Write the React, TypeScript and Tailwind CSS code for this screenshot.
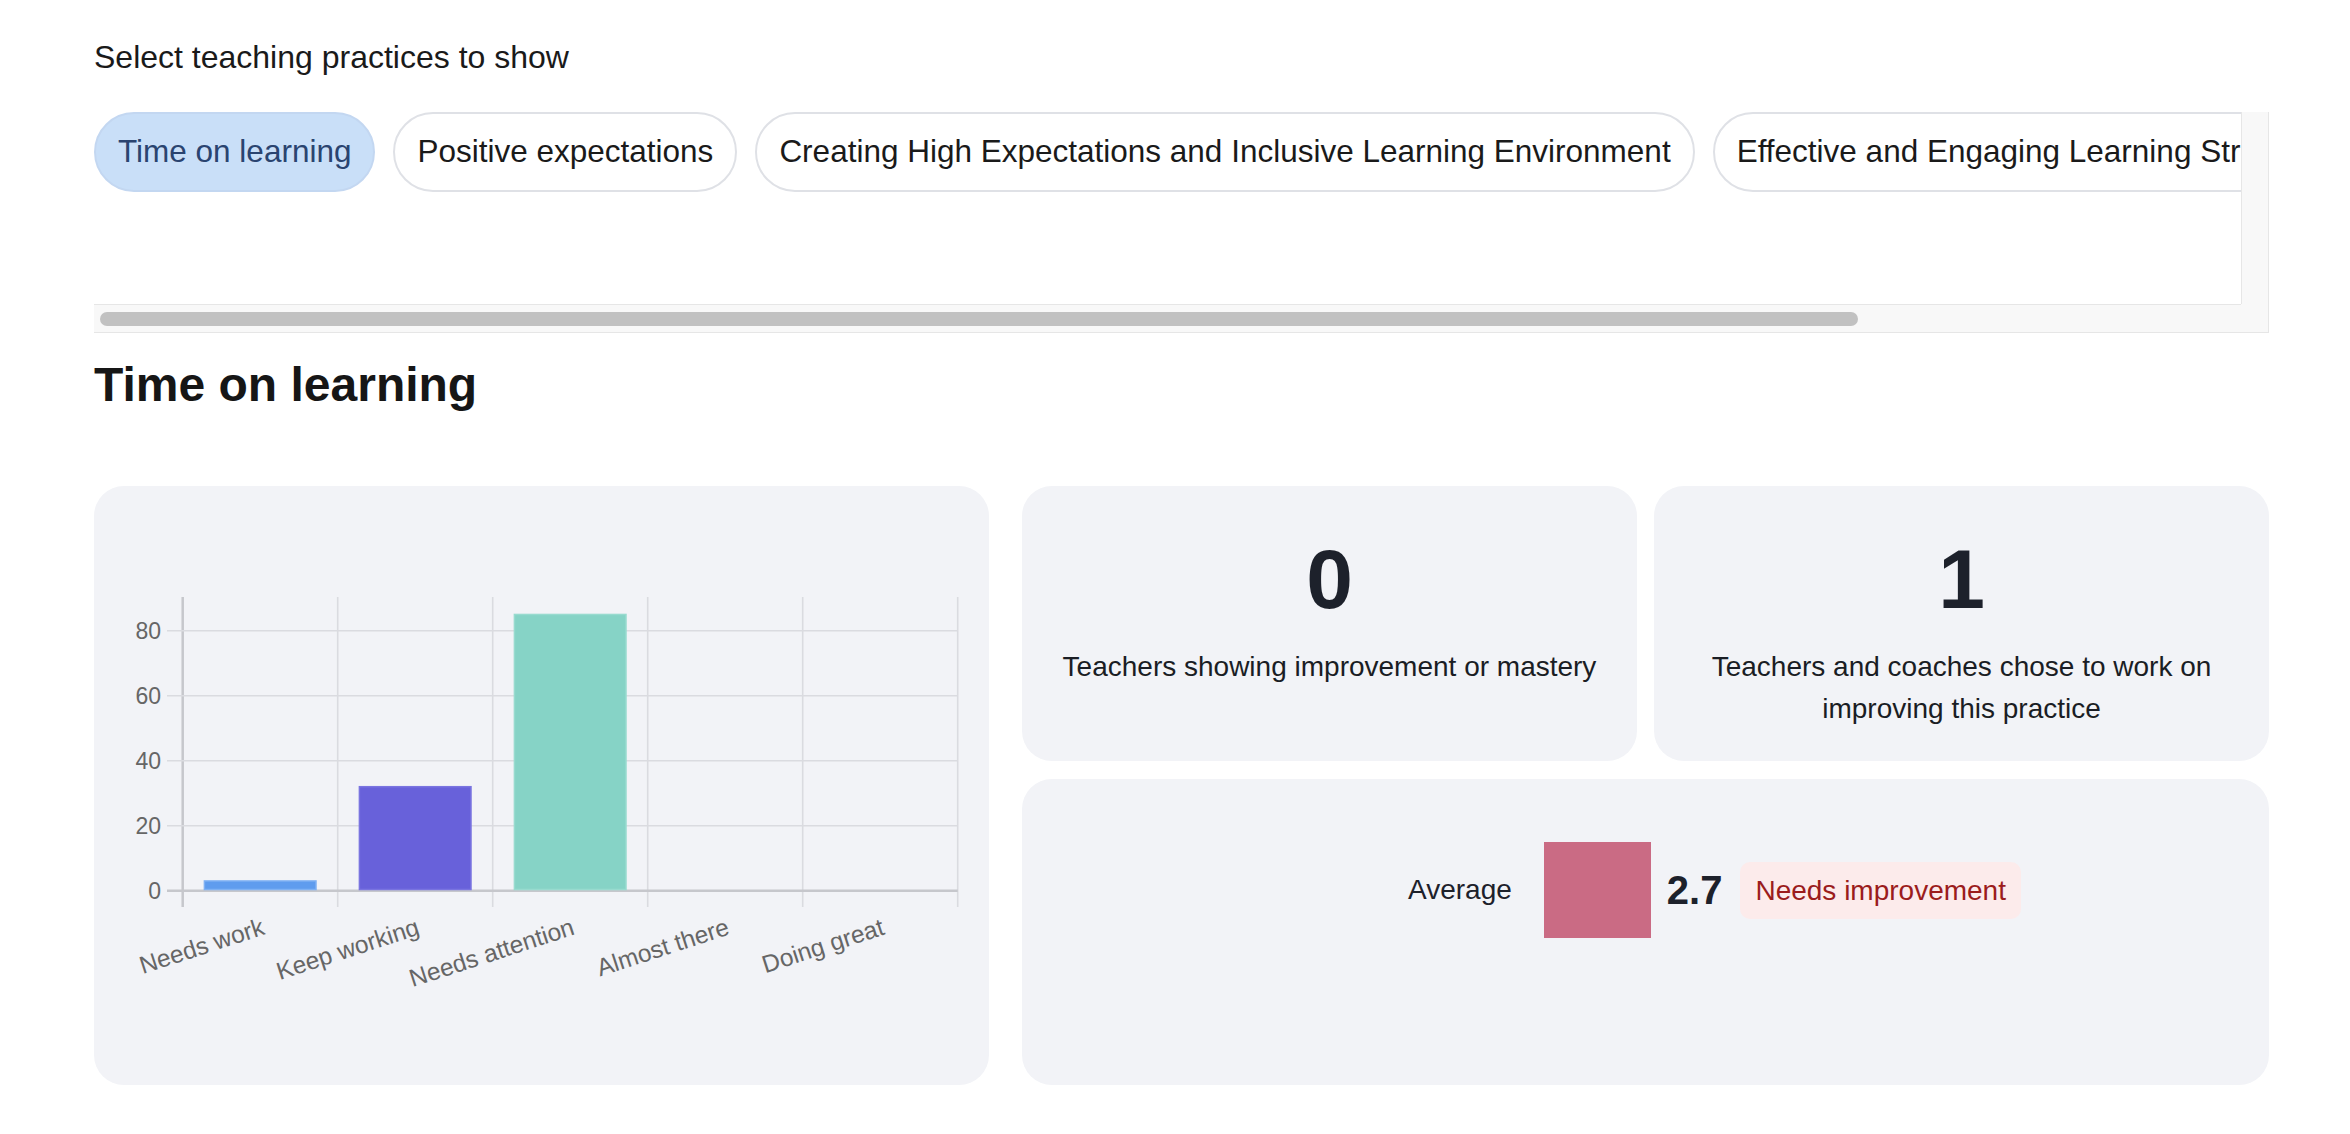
import React from "react";

const pills = [
  { label: "Time on learning", active: true },
  { label: "Positive expectations", active: false },
  { label: "Creating High Expectations and Inclusive Learning Environment", active: false },
  { label: "Effective and Engaging Learning Strategies", active: false },
];

const yTicks = [0, 20, 40, 60, 80];
const bars = [
  { label: "Needs work", value: 3, fill: "#5f9cee", stroke: "#7fb1f3" },
  { label: "Keep working", value: 32, fill: "#6861da", stroke: "#7a74e0" },
  { label: "Needs attention", value: 85, fill: "#86d3c6", stroke: "#98dbcf" },
  { label: "Almost there", value: 0, fill: "#f0c36a", stroke: "#f0c36a" },
  { label: "Doing great", value: 0, fill: "#7ecb82", stroke: "#7ecb82" },
];

// chart geometry, in card coordinates
const left = 88.7;
const colW = 155;
const zeroY = 404.7;
const perUnit = 3.25;
const top = 111;

const BarChart = () => {
  return (
    <svg viewBox="0 0 895 599" className="block h-full w-full">
      {/* vertical grid */}
      {[0, 1, 2, 3, 4, 5].map((i) => (
        <line
          key={"v" + i}
          x1={left + colW * i}
          x2={left + colW * i}
          y1={top}
          y2={421}
          stroke={i === 0 ? "#c6c7cc" : "#dadbe0"}
          strokeWidth={i === 0 ? 2.5 : 1.6}
        />
      ))}
      {/* horizontal grid */}
      {yTicks.map((t) => {
        const y = zeroY - t * perUnit;
        return (
          <g key={"h" + t}>
            <line
              x1={73}
              x2={left + colW * 5}
              y1={y}
              y2={y}
              stroke={t === 0 ? "#c6c7cc" : "#dadbe0"}
              strokeWidth={t === 0 ? 2.5 : 1.6}
            />
            <text
              x={67}
              y={y}
              textAnchor="end"
              dominantBaseline="central"
              fill="#666"
              fontSize={23}
              fontFamily="'Liberation Sans', Arial, sans-serif"
            >
              {t}
            </text>
          </g>
        );
      })}
      {/* bars */}
      {bars.map((b, i) => {
        const cx = left + colW * i + colW / 2;
        const h = b.value * perUnit;
        if (!h) return null;
        return (
          <rect
            key={b.label}
            x={cx - 55.8}
            y={zeroY - h}
            width={111.6}
            height={h - 1.2}
            fill={b.fill}
            stroke={b.stroke}
            strokeWidth={1.5}
          />
        );
      })}
      {/* x labels */}
      {bars.map((b, i) => {
        const cx = left + colW * i + colW / 2 + 3;
        return (
          <text
            key={"l" + b.label}
            x={cx}
            y={440}
            textAnchor="end"
            dominantBaseline="central"
            fill="#666"
            fontSize={24.5}
            fontFamily="'Liberation Sans', Arial, sans-serif"
            transform={`rotate(-18 ${cx} 440)`}
          >
            {b.label}
          </text>
        );
      })}
    </svg>
  );
};

const App = () => {
  return (
    <div className="min-h-screen bg-white pl-[94px] pr-[81px] pt-[33px] font-['Liberation_Sans',Arial,sans-serif] text-[#1a1a1a]">
      <p className="text-[32px] leading-[48px]">Select teaching practices to show</p>

      <div className="mt-[31px] flex h-[221px] flex-col bg-[#f8f8f8]">
        <div className="flex h-[192px]">
          <div className="min-w-0 flex-1 overflow-hidden bg-white">
            <div className="flex w-max gap-[18px]">
              {pills.map((p) => (
                <button
                  key={p.label}
                  type="button"
                  className={
                    "flex h-[80px] shrink-0 items-center whitespace-nowrap rounded-full border-2 px-[22px] text-[31.5px] " +
                    (p.active
                      ? "border-[#c3d7f1] bg-[#c9dff8] text-[#2a4470]"
                      : "border-[#dfe1e6] bg-white text-[#1a1a1a]")
                  }
                >
                  {p.label}
                </button>
              ))}
            </div>
          </div>
          <div className="w-[28px] border-x-[1.5px] border-[#e6e6e6]" />
        </div>
        <div className="flex h-[29px]">
          <div className="flex-1 border-y-[1.5px] border-[#e6e6e6] px-[6px] py-[6.5px]">
            <div className="h-full w-[1758px] rounded-full bg-[#c1c1c1]" />
          </div>
          <div className="w-[28px] border-b-[1.5px] border-r-[1.5px] border-[#e6e6e6]" />
        </div>
      </div>

      <h2 className="mt-[22px] text-[48px] font-bold leading-[60px] text-[#161616]">
        Time on learning
      </h2>

      <section className="mt-[71px] grid grid-cols-[895px_1fr] gap-x-[33px]">
        <div className="h-[599px] rounded-[30px] bg-[#f2f3f7]">
          <BarChart />
        </div>

        <div className="grid grid-cols-2 grid-rows-[auto_1fr] gap-x-[17px] gap-y-[18px]">
          <div className="flex flex-col items-center rounded-[30px] bg-[#f2f3f7] px-[32px] pb-[31px] pt-[51px] text-center">
            <span className="text-[84px] font-bold leading-none text-[#1d212b]">0</span>
            <p className="mt-[25px] text-[28px] leading-[42px] text-[#1a1d24]">
              Teachers showing improvement or mastery
            </p>
          </div>
          <div className="flex flex-col items-center rounded-[30px] bg-[#f2f3f7] px-[32px] pb-[31px] pt-[51px] text-center">
            <span className="text-[84px] font-bold leading-none text-[#1d212b]">1</span>
            <p className="mt-[25px] text-[28px] leading-[42px] text-[#1a1d24]">
              Teachers and coaches chose to work on improving this practice
            </p>
          </div>

          <div className="col-span-2 rounded-[30px] bg-[#f2f3f7] pl-[138px] pt-[63px]">
            <div className="flex items-center justify-center">
              <span className="mr-[32px] text-[28px] text-[#1d212b]">Average</span>
              <div className="mr-[16px] h-[96px] w-[107px] bg-[#ca6b84]" />
              <span className="mr-[18px] text-[40px] font-bold text-[#1d212b]">2.7</span>
              <span className="rounded-[10px] bg-[#fcebeb] px-[15px] py-[10px] text-[28px] leading-[37px] text-[#9b1c1c]">
                Needs improvement
              </span>
            </div>
          </div>
        </div>
      </section>
    </div>
  );
};

export default App;
